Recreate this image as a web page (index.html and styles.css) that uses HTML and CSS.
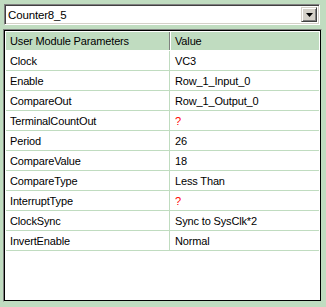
FILE: index.html
```html
<!DOCTYPE html>
<html lang="en">
<head>
    <meta charset="UTF-8">
    <title>User Module Parameters</title>
    <link rel="stylesheet" href="styles.css">
</head>
<body>
    <div class="panel">
        <div class="combo">
            <span class="combo-text">Counter8_5</span>
            <span class="combo-btn">
                <svg width="7" height="4" viewBox="0 0 7 4"><path d="M0 0h7L3.5 4z" fill="#000"/></svg>
            </span>
        </div>

        <div class="grid">
            <div class="row head">
                <div class="cell name">User Module Parameters</div>
                <div class="cell value">Value</div>
            </div>
            <div class="row"><div class="cell name">Clock</div><div class="cell value">VC3</div></div>
            <div class="row"><div class="cell name">Enable</div><div class="cell value">Row_1_Input_0</div></div>
            <div class="row"><div class="cell name">CompareOut</div><div class="cell value">Row_1_Output_0</div></div>
            <div class="row"><div class="cell name">TerminalCountOut</div><div class="cell value unset">?</div></div>
            <div class="row"><div class="cell name">Period</div><div class="cell value">26</div></div>
            <div class="row"><div class="cell name">CompareValue</div><div class="cell value">18</div></div>
            <div class="row"><div class="cell name">CompareType</div><div class="cell value">Less Than</div></div>
            <div class="row"><div class="cell name">InterruptType</div><div class="cell value unset">?</div></div>
            <div class="row"><div class="cell name">ClockSync</div><div class="cell value">Sync to SysClk*2</div></div>
            <div class="row"><div class="cell name">InvertEnable</div><div class="cell value">Normal</div></div>
        </div>
    </div>
</body>
</html>
```

FILE: styles.css
```css
* {
    box-sizing: border-box;
    margin: 0;
    padding: 0;
    font-family: 'Liberation Sans', Arial, sans-serif;
}

body {
    background-color: #c0dcc0;
    width: 326px;
    height: 307px;
    overflow: hidden;
    font-size: 11px;
    letter-spacing: -0.15px;
    color: #000;
}

.panel {
    padding: 4px 4px 0 3px;
}

/* combo box */
.combo {
    display: flex;
    align-items: center;
    height: 21px;
    margin: 0 2px 0 1px;
    background: #fff;
    border: 1px solid;
    border-color: #808080 #fff #fff #808080;
    box-shadow: inset 1px 1px 0 #404040, inset -1px -1px 0 #d4d0c8;
    padding: 2px 2px 2px 3px;
}

.combo-text {
    flex: 1;
    font-size: 11.5px;
    padding-top: 1px;
}

.combo-btn {
    width: 16px;
    height: 15px;
    display: flex;
    align-items: center;
    justify-content: center;
    background: #d4d0c8;
    border: 1px solid;
    border-color: #d4d0c8 #404040 #404040 #d4d0c8;
    box-shadow: inset 1px 1px 0 #fff, inset -1px -1px 0 #808080;
}

/* parameter grid */
.grid {
    margin-top: 4px;
    height: 273px;
    background: #fff;
    border: 1px solid;
    border-color: #808080 #c0dcc0 #c0dcc0 #808080;
    box-shadow: inset 1px 1px 0 #000, inset -1px -1px 0 #000;
    padding: 2px 2px 0 2px;
}

.row {
    display: flex;
    height: 20px;
    border-bottom: 1px solid #c0dcc0;
}

.cell {
    display: flex;
    align-items: center;
    padding-left: 4px;
}

.name {
    width: 164px;
    border-right: 1px solid #c0dcc0;
}

.value {
    flex: 1;
    padding-left: 5px;
}

.unset {
    color: #ff0000;
}

.head {
    background: #c0dcc0;
    height: 19px;
    border-bottom: 1px solid #fff;
}

.head .name {
    border-right: 1px solid #808080;
    box-shadow: 1px 0 0 #fff;
}
```
